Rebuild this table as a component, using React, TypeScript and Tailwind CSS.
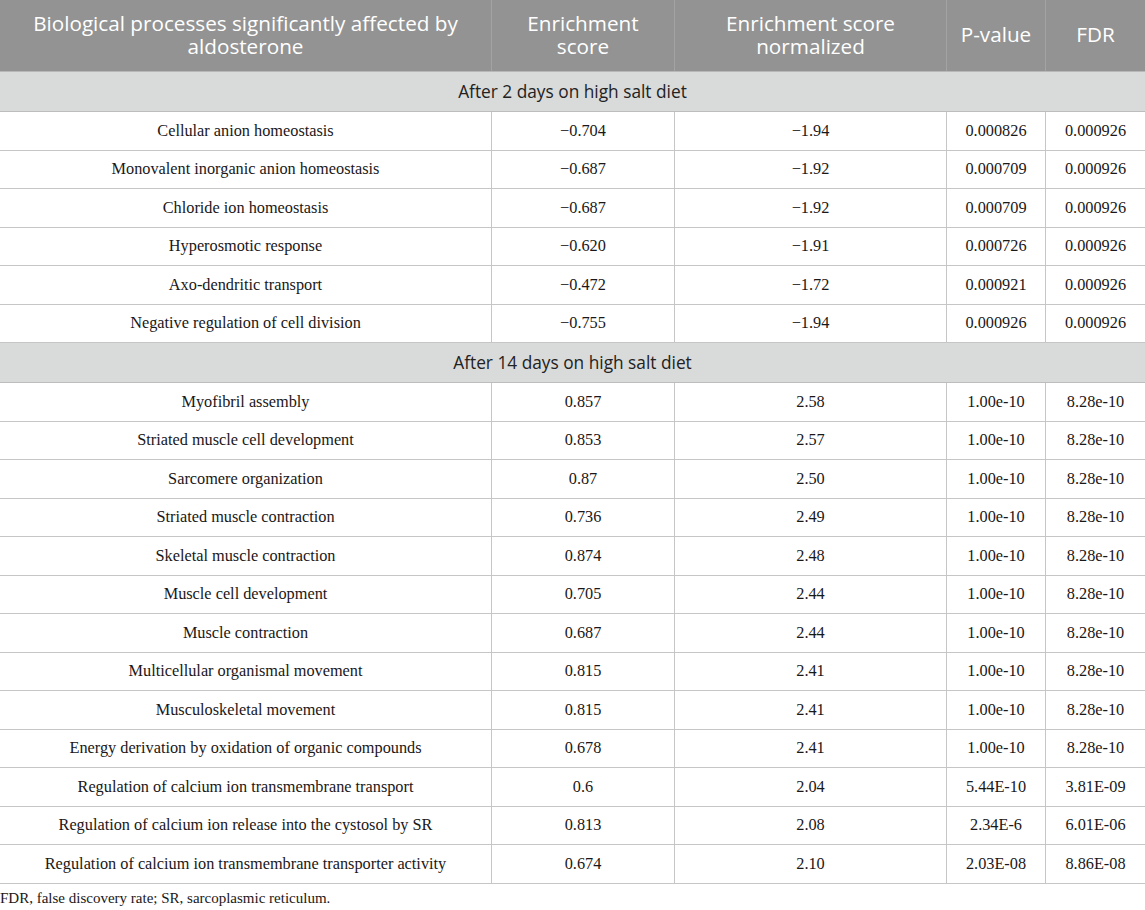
import React from "react";

const sec1 = [
  ["Cellular anion homeostasis", "\u22120.704", "\u22121.94", "0.000826", "0.000926"],
  ["Monovalent inorganic anion homeostasis", "\u22120.687", "\u22121.92", "0.000709", "0.000926"],
  ["Chloride ion homeostasis", "\u22120.687", "\u22121.92", "0.000709", "0.000926"],
  ["Hyperosmotic response", "\u22120.620", "\u22121.91", "0.000726", "0.000926"],
  ["Axo-dendritic transport", "\u22120.472", "\u22121.72", "0.000921", "0.000926"],
  ["Negative regulation of cell division", "\u22120.755", "\u22121.94", "0.000926", "0.000926"],
];

const sec2 = [
  ["Myofibril assembly", "0.857", "2.58", "1.00e-10", "8.28e-10"],
  ["Striated muscle cell development", "0.853", "2.57", "1.00e-10", "8.28e-10"],
  ["Sarcomere organization", "0.87", "2.50", "1.00e-10", "8.28e-10"],
  ["Striated muscle contraction", "0.736", "2.49", "1.00e-10", "8.28e-10"],
  ["Skeletal muscle contraction", "0.874", "2.48", "1.00e-10", "8.28e-10"],
  ["Muscle cell development", "0.705", "2.44", "1.00e-10", "8.28e-10"],
  ["Muscle contraction", "0.687", "2.44", "1.00e-10", "8.28e-10"],
  ["Multicellular organismal movement", "0.815", "2.41", "1.00e-10", "8.28e-10"],
  ["Musculoskeletal movement", "0.815", "2.41", "1.00e-10", "8.28e-10"],
  ["Energy derivation by oxidation of organic compounds", "0.678", "2.41", "1.00e-10", "8.28e-10"],
  ["Regulation of calcium ion transmembrane transport", "0.6", "2.04", "5.44E-10", "3.81E-09"],
  ["Regulation of calcium ion release into the cystosol by SR", "0.813", "2.08", "2.34E-6", "6.01E-06"],
  ["Regulation of calcium ion transmembrane transporter activity", "0.674", "2.10", "2.03E-08", "8.86E-08"],
];

const grid = "grid grid-cols-[492px_183px_272px_99px_99px]";
const sans = "font-['Open_Sans','Noto_Sans',sans-serif]";
const serif = "font-['Liberation_Serif','DejaVu_Serif',serif]";

function Row({ r }: { r: string[] }) {
  return (
    <div className={`${grid} h-[38.5px] border-b border-[#c6c6c6] bg-white`}>
      {r.map((c, i) => (
        <div
          key={i}
          className={`flex items-center justify-center whitespace-nowrap text-[16.3px] text-[#1a1718] ${serif} ${i < 4 ? "border-r border-[#c6c6c6]" : ""}`}
        >
          {c}
        </div>
      ))}
    </div>
  );
}

function Section({ title }: { title: string }) {
  return (
    <div className={`flex h-[40px] items-center justify-center border-b border-[#bdbdbd] bg-[#d9dada] text-[17.3px] text-[#222] ${sans}`}>
      {title}
    </div>
  );
}

export default function App() {
  return (
    <div className="w-[1145px] bg-white">
      <div className={`${grid} h-[72px] border-b border-[#b8b8b8] bg-[#939393] text-[20.7px] leading-[23px] text-white ${sans}`}>
        <div className="flex items-center justify-center border-r border-[#a3a3a3] px-[18px] pb-[2px] text-center">
          Biological processes significantly affected by aldosterone
        </div>
        <div className="flex items-center justify-center border-r border-[#a3a3a3] px-[14px] pb-[2px] text-center">
          Enrichment score
        </div>
        <div className="flex items-center justify-center border-r border-[#a3a3a3] px-[10px] pb-[2px] text-center">
          Enrichment score normalized
        </div>
        <div className="flex items-center justify-center whitespace-nowrap border-r border-[#a3a3a3] pb-[2px] text-center">
          P-value
        </div>
        <div className="flex items-center justify-center pb-[2px] text-center">FDR</div>
      </div>
      <Section title="After 2 days on high salt diet" />
      {sec1.map((r, i) => (
        <Row key={i} r={r} />
      ))}
      <Section title="After 14 days on high salt diet" />
      {sec2.map((r, i) => (
        <Row key={i} r={r} />
      ))}
      <div className={`pt-[3px] text-[15px] text-[#1a1718] ${serif}`}>
        FDR, false discovery rate; SR, sarcoplasmic reticulum.
      </div>
    </div>
  );
}
